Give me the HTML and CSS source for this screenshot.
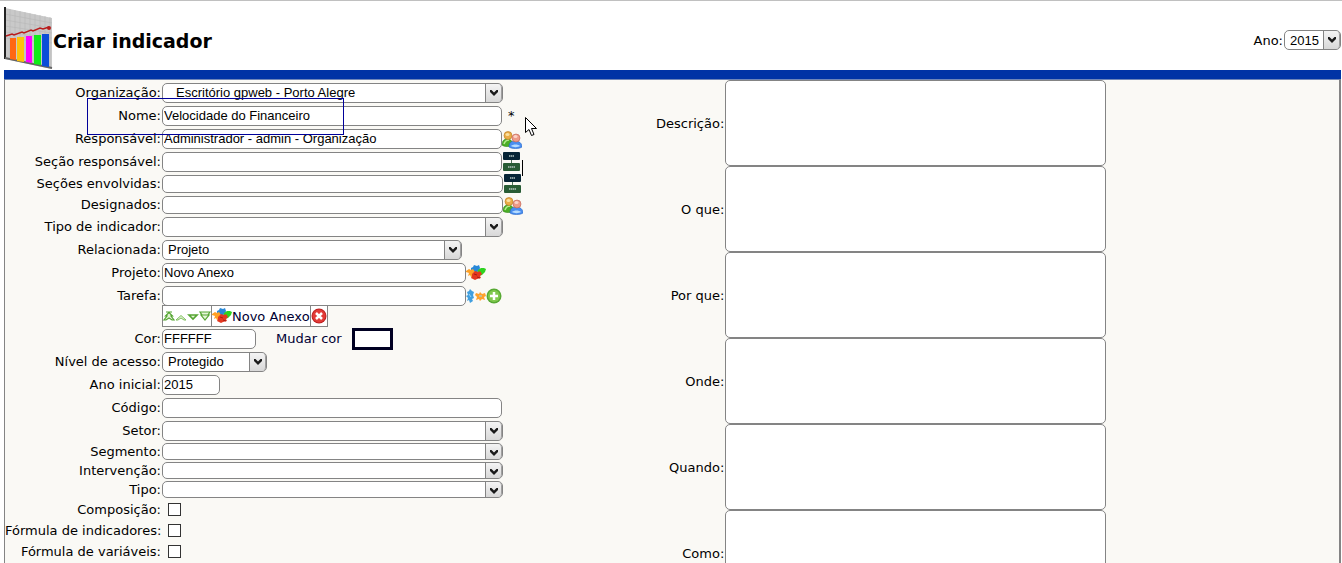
FILE: index.html
```html
<!DOCTYPE html>
<html lang="pt-BR">

<head>
  <meta charset="UTF-8">
  <title>Criar indicador</title>
  <link rel="stylesheet" href="styles.css">
</head>

<body>
  <svg class="sprite" aria-hidden="true">
    <symbol id="seta" viewBox="0 0 8 6">
      <path d="M0 0h1.500L4 2.500 6.500 0H8v2L4 6 0 2z" fill="#1a1a1a" />
    </symbol>
    <symbol id="usuarios" viewBox="0 0 20 18">
      <path d="M0 14c0-4 2-6 5-6s6 2 6 6c-2 2-9 2-11 0z" fill="#4cae26" stroke="#2d8613" stroke-width=".6" />
      <path d="M2 13c1-3 3-4 5-4" stroke="#b6ea8e" stroke-width="1.500" fill="none" />
      <circle cx="6" cy="4.500" r="4" fill="#e9ac48" stroke="#b9771d" stroke-width=".6" />
      <ellipse cx="5.500" cy="3.500" rx="2" ry="1.500" fill="#fbe0a0" />
      <path d="M7 16c0-4 2-6 6-6s7 2 7 6c-3 2-10 2-13 0z" fill="#4a8ef0" stroke="#2766c4" stroke-width=".6" />
      <path d="M9 15c2-2 7-2 9 0-2 1.500-7 1.500-9 0z" fill="#b6dcff" />
      <circle cx="14" cy="7" r="4" fill="#ee9b88" stroke="#bf5f50" stroke-width=".6" />
      <ellipse cx="13.500" cy="5.500" rx="2" ry="1.500" fill="#fbd3c8" />
    </symbol>
    <symbol id="secao" viewBox="0 0 17 19">
      <path d="M8.500 7v5" stroke="#52745b" stroke-width="1" />
      <rect x="0" y="0" width="17" height="8" rx="1" fill="#062435" />
      <rect x="0" y="11" width="17" height="8" rx="1" fill="#285c35" />
      <path d="M6 4h5M5 15h7" stroke="#b4c4c0" stroke-width="1.500" stroke-dasharray="1.500 .5" />
    </symbol>
    <symbol id="projeto" viewBox="0 0 20 16">
      <path d="M5 3l2-1 1-2 3 1 2-1 1 3-1 3-4 2-4-2z" fill="#2989d8" />
      <path d="M0 6l3-2 2 1 2-1 2 3-1 4-3 1-1-2-2 1 1-3-3-1z" fill="#ffa126" />
      <path d="M12 5l3-2h3l2 1-1 3-3 3-3 1-2-2z" fill="#2ed31f" />
      <path d="M6 9l3-3 3 1 2-1 2 3-2 2 1 2-4 1-2 1-4-2 1-2z" fill="#e33820" />
      <path d="M8 9l3 1M11 12l3 1" stroke="#a91913" />
    </symbol>
    <symbol id="tarefa" viewBox="0 0 20 14">
      <path d="M1 3l2-1 1-2 2 2 2 1-1 3 1 3-2 1 1 2-3 2-1-3-2 1 1-3-2-2 2-1z" fill="#419fdf" />
      <path d="M10 4l3 1 1-2 2 2 3-1 1 3-2 1 1 3-3-1-2 2-1-2-3 1 1-3-2-2z" fill="#ffa12b" />
      <path d="M3 5l2 3M13 7h3" stroke="#9cd6f4" />
    </symbol>
    <symbol id="adicionar" viewBox="0 0 16 16">
      <circle cx="8" cy="8" r="7.500" fill="#57a933" />
      <circle cx="8" cy="8" r="6" fill="#80c84e" />
      <path d="M8 4v8M4 8h8" stroke="#fff" stroke-width="2.500" />
    </symbol>
    <symbol id="remover" viewBox="0 0 16 16">
      <circle cx="8" cy="8" r="7.500" fill="#bf2020" />
      <circle cx="8" cy="8" r="6.500" fill="#e23b37" />
      <path d="M5 5l6 6M11 5l-6 6" stroke="#fff" stroke-width="2.500" />
    </symbol>
    <symbol id="ordem" viewBox="0 0 48 11">
      <g fill="#e5f4d8" stroke="#55a532" stroke-width="1.200">
        <path d="M3 1h6M6 1.500L2.500 5H4L1 9h2l3-2 3 2h2L8 5h1.500z" />
        <path d="M13 9l5-4.500L23 9h-2l-3-2-3 2z" stroke="#7fbf5f" stroke-width="1" />
        <path d="M26 4h8l-4 4z" stroke-width="1.600" />
        <path d="M37 1h10l-2 3h1l-4 5-4-5h1zM39 4h6" />
      </g>
    </symbol>
  </svg>

  <header class="topo">
    <svg class="logo" viewBox="0 0 49 63" aria-hidden="true">
      <path d="M1 1l47 10v51L1 52z" fill="#c9c9c9" />
      <path d="M6 2v51M11 3v51M16 4v51M21 5v51M26 6v51M31 7v51M36 8v51M41 9v51M46 10v51M1 7l47 9M1 13l47 8M1 19l47 7M1 25l47 6M1 31l47 5" stroke="#b7b7b7" stroke-width=".6" />
      <path d="M0 0h2v52H0z" fill="#222" />
      <path d="M1 51l47 10" stroke="#666" stroke-width="2" />
      <path d="M6 31h6v22l-6-1z" fill="#ff6813" />
      <path d="M13 30h7v25l-7-1z" fill="#ffc20a" />
      <path d="M22 29h6v27l-6-1z" fill="#f0f" />
      <path d="M30 28h7v30l-7-1z" fill="#10ed18" />
      <path d="M38 27h7v33l-7-1z" fill="#0b4ed8" />
      <path d="M2 29l6-2 2 1 8-3 2 1 7-3 2 1 7-3 3 1 6-2" stroke="#b91c1c" stroke-width="1.500" fill="none" />
      <circle cx="45" cy="21" r="2" fill="#b91c1c" />
    </svg>
    <h1>Criar indicador</h1>
    <label for="ano">Ano:</label>
    <span class="combo combo-ano">
      <select id="ano"><option>2015</option></select>
      <svg class="botao"><use href="#seta" x="4" y="6" width="8" height="6" /></svg>
    </span>
  </header>

  <form class="painel">
    <div class="coluna-dados">
      <div class="linha">
        <label for="organizacao">Organização:</label>
        <span class="combo recuado">
          <select id="organizacao"><option>Escritório gpweb - Porto Alegre</option></select>
          <svg class="botao"><use href="#seta" x="4" y="6" width="8" height="6" /></svg>
        </span>
      </div>
      <div class="linha">
        <label for="nome">Nome:</label>
        <input class="texto" type="text" id="nome" value="Velocidade do Financeiro">
        <span class="obrigatorio">*</span>
      </div>
      <div class="linha">
        <label for="responsavel">Responsável:</label>
        <input class="texto" type="text" id="responsavel" value="Administrador - admin - Organização">
        <a href="#" aria-label="Selecionar responsável"><svg class="icone-usuarios"><use href="#usuarios" /></svg></a>
      </div>
      <div class="linha">
        <label for="secao_resp">Seção responsável:</label>
        <input class="texto" type="text" id="secao_resp">
        <a href="#" aria-label="Selecionar seção"><svg class="icone-secao"><use href="#secao" /></svg></a>
      </div>
      <div class="linha media">
        <label for="secoes">Seções envolvidas:</label>
        <input class="texto" type="text" id="secoes">
        <a href="#" aria-label="Selecionar seções"><svg class="icone-secao"><use href="#secao" /></svg></a>
      </div>
      <div class="linha media">
        <label for="designados">Designados:</label>
        <input class="texto" type="text" id="designados">
        <a href="#" aria-label="Selecionar designados"><svg class="icone-usuarios"><use href="#usuarios" /></svg></a>
      </div>
      <div class="linha">
        <label for="tipo_indicador">Tipo de indicador:</label>
        <span class="combo">
          <select id="tipo_indicador"><option></option></select>
          <svg class="botao"><use href="#seta" x="4" y="6" width="8" height="6" /></svg>
        </span>
      </div>
      <div class="linha">
        <label for="relacionada">Relacionada:</label>
        <span class="combo combo-relacionada">
          <select id="relacionada"><option>Projeto</option></select>
          <svg class="botao"><use href="#seta" x="4" y="6" width="8" height="6" /></svg>
        </span>
      </div>
      <div class="linha">
        <label for="projeto_nome">Projeto:</label>
        <input class="texto texto-projeto" type="text" id="projeto_nome" value="Novo Anexo">
        <a href="#" aria-label="Selecionar projeto"><svg class="icone-projeto"><use href="#projeto" /></svg></a>
      </div>
      <div class="linha">
        <label for="tarefa_nome">Tarefa:</label>
        <input class="texto texto-projeto" type="text" id="tarefa_nome">
        <a href="#" aria-label="Selecionar tarefa"><svg class="icone-tarefa"><use href="#tarefa" /></svg></a>
        <a href="#" aria-label="Adicionar"><svg class="icone-acao"><use href="#adicionar" /></svg></a>
      </div>
      <div class="linha anexos">
        <table>
          <tr>
            <td><svg class="icone-ordem"><use href="#ordem" /></svg></td>
            <td><a href="#"><svg class="icone-projeto"><use href="#projeto" /></svg>Novo Anexo</a></td>
            <td><a href="#" aria-label="Remover"><svg class="icone-acao"><use href="#remover" /></svg></a></td>
          </tr>
        </table>
      </div>
      <div class="linha">
        <label for="cor">Cor:</label>
        <input class="texto texto-cor" type="text" id="cor" value="FFFFFF">
        <a class="mudar-cor" href="#">Mudar cor <span class="amostra"></span></a>
      </div>
      <div class="linha">
        <label for="acesso">Nível de acesso:</label>
        <span class="combo combo-acesso">
          <select id="acesso"><option>Protegido</option></select>
          <svg class="botao"><use href="#seta" x="4" y="6" width="8" height="6" /></svg>
        </span>
      </div>
      <div class="linha">
        <label for="ano_inicial">Ano inicial:</label>
        <input class="texto texto-ano" type="text" id="ano_inicial" value="2015">
      </div>
      <div class="linha">
        <label for="codigo">Código:</label>
        <input class="texto" type="text" id="codigo">
      </div>
      <div class="linha">
        <label for="setor">Setor:</label>
        <span class="combo">
          <select id="setor"><option></option></select>
          <svg class="botao"><use href="#seta" x="4" y="6" width="8" height="6" /></svg>
        </span>
      </div>
      <div class="linha baixa">
        <label for="segmento">Segmento:</label>
        <span class="combo">
          <select id="segmento"><option></option></select>
          <svg class="botao"><use href="#seta" x="4" y="6" width="8" height="6" /></svg>
        </span>
      </div>
      <div class="linha baixa">
        <label for="intervencao">Intervenção:</label>
        <span class="combo">
          <select id="intervencao"><option></option></select>
          <svg class="botao"><use href="#seta" x="4" y="6" width="8" height="6" /></svg>
        </span>
      </div>
      <div class="linha baixa">
        <label for="tipo">Tipo:</label>
        <span class="combo">
          <select id="tipo"><option></option></select>
          <svg class="botao"><use href="#seta" x="4" y="6" width="8" height="6" /></svg>
        </span>
      </div>
      <div class="linha media">
        <label for="composicao">Composição:</label>
        <input type="checkbox" id="composicao">
      </div>
      <div class="linha media">
        <label for="formula_ind">Fórmula de indicadores:</label>
        <input type="checkbox" id="formula_ind">
      </div>
      <div class="linha media">
        <label for="formula_var">Fórmula de variáveis:</label>
        <input type="checkbox" id="formula_var">
      </div>
    </div>

    <div class="coluna-descricao">
      <div class="bloco">
        <label for="descricao">Descrição:</label>
        <textarea id="descricao"></textarea>
      </div>
      <div class="bloco">
        <label for="oque">O que:</label>
        <textarea id="oque"></textarea>
      </div>
      <div class="bloco">
        <label for="porque">Por que:</label>
        <textarea id="porque"></textarea>
      </div>
      <div class="bloco">
        <label for="onde">Onde:</label>
        <textarea id="onde"></textarea>
      </div>
      <div class="bloco">
        <label for="quando">Quando:</label>
        <textarea id="quando"></textarea>
      </div>
      <div class="bloco">
        <label for="como">Como:</label>
        <textarea id="como"></textarea>
      </div>
    </div>
  </form>

  <!-- destaque do campo nome e ponteiros -->
  <div class="destaque"></div>
  <div class="cursor-texto"></div>
  <svg class="ponteiro" viewBox="0 0 12 19" aria-hidden="true">
    <path d="M.5.5v15l3.500-3 2.500 6 2.500-1-2.500-6h5z" fill="#fff" stroke="#000" />
  </svg>
</body>

</html>
```
FILE: styles.css
```css
* {
  box-sizing: border-box;
}

body {
  position: relative;
  margin: 0;
  padding: 0 1px 0 4px;
  font-family: Verdana, "DejaVu Sans", sans-serif;
  font-size: 13px;
  color: #000;
  background: #fff;
}

body::before {
  content: "";
  position: absolute;
  top: 0;
  left: 0;
  right: 0;
  border-top: 1px solid #c0c0c0;
}

.sprite {
  position: absolute;
  width: 0;
  height: 0;
}

a {
  color: #000033;
  text-decoration: none;
}

/* topo */
.topo {
  display: flex;
  align-items: center;
  height: 79px;
  padding-top: 6px;
  border-bottom: 9px solid #0033a5;
}

.logo {
  width: 49px;
  height: 63px;
}

h1 {
  flex: 1;
  margin: 0;
  padding-top: 6px;
  font-size: 19px;
  font-weight: bold;
}

.topo label,
.combo-ano {
  margin-top: 4px;
}

.topo label {
  padding-right: 1px;
}

/* painel do formulario */
.painel {
  display: flex;
  border: 1px solid #848484;
  border-top-color: #6f86b8;
  border-right-width: 2px;
  background: #faf9f5;
}

.coluna-dados {
  flex: 0 0 48%;
  padding-top: 1px;
}

.linha {
  display: flex;
  align-items: center;
  height: 23px;
}

.linha.media {
  height: 21px;
}

.linha.baixa {
  height: 19px;
}

/* rotulos longos avancam para a esquerda */
.linha > label {
  display: flex;
  flex: 0 0 157px;
  justify-content: flex-end;
  padding-right: 1px;
  white-space: nowrap;
}

.texto,
select,
textarea {
  border: 1px solid #848484;
  border-radius: 5px;
  background: #fff;
  color: #000;
  font-family: Arial, "Liberation Sans", sans-serif;
  font-size: 13px;
}

.texto {
  width: 340px;
  height: 20px;
  padding: 0 1px;
}

.media .texto {
  height: 18px;
  width: 341px;
}

.linha .texto-projeto {
  width: 304px;
}

.texto-cor {
  width: 94px;
}

.texto-ano {
  width: 58px;
}

.combo {
  position: relative;
  display: flex;
  width: 341px;
  height: 20px;
}

.baixa .combo {
  height: 17px;
}

.combo-relacionada {
  width: 300px;
}

.combo-acesso {
  width: 105px;
}

.combo-ano {
  width: 57px;
}

select {
  appearance: none;
  width: 100%;
  padding: 0 20px 0 5px;
}

.recuado select {
  padding-left: 13px;
}

.botao {
  position: absolute;
  top: 1px;
  right: 1px;
  bottom: 1px;
  width: 17px;
  height: calc(100% - 2px);
  border-left: 1px solid #848484;
  border-right: 1px solid #a0a0a0;
  border-radius: 0 4px 4px 0;
  background: linear-gradient(#f4f4f4, #d8d8d8);
  pointer-events: none;
}

.linha a {
  display: flex;
  align-items: center;
}

.obrigatorio {
  padding-left: 6px;
}

.icone-usuarios {
  width: 20px;
  height: 18px;
  margin-top: 2px;
}

.icone-secao {
  width: 17px;
  height: 19px;
  margin-left: 1px;
}

.icone-projeto {
  width: 20px;
  height: 16px;
}

.icone-tarefa {
  width: 20px;
  height: 14px;
}

.icone-acao {
  width: 16px;
  height: 16px;
}

.icone-ordem {
  display: block;
  width: 48px;
  height: 11px;
}

.linha.anexos {
  height: 20px;
  padding-left: 157px;
}

table {
  border-collapse: collapse;
  margin-top: -2px;
}

td {
  height: 21px;
  padding: 0;
  border: 1px solid #848484;
  background: #fff;
}

.mudar-cor {
  gap: 10px;
  margin-left: 20px;
}

.amostra {
  width: 41px;
  height: 22px;
  border: 3px solid #000022;
  background: #fff;
}

input[type="checkbox"] {
  appearance: none;
  width: 13px;
  height: 13px;
  margin: 0 0 0 6px;
  border: 1px solid #333;
  background: #fff;
}

/* coluna da direita */
.coluna-descricao {
  flex: 1;
}

.bloco {
  display: flex;
  align-items: center;
}

.bloco label {
  flex: 0 0 80px;
  padding-right: 1px;
  text-align: right;
}

textarea {
  width: 381px;
  height: 86px;
  resize: none;
}

.destaque {
  position: absolute;
  top: 98px;
  left: 87px;
  width: 257px;
  height: 37px;
  border: 1px solid #000099;
  pointer-events: none;
}

.cursor-texto {
  position: absolute;
  top: 160px;
  left: 522px;
  width: 1px;
  height: 16px;
  background: #000;
}

.ponteiro {
  position: absolute;
  top: 117px;
  left: 525px;
  width: 12px;
  height: 19px;
}
```
